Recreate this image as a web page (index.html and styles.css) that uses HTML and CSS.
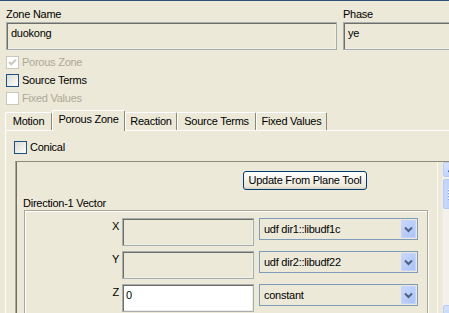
FILE: index.html
```html
<!DOCTYPE html>
<html>
<head>
<meta charset="utf-8">
<link rel="stylesheet" href="styles.css">
</head>
<body>
<div class="window">
  <div class="name-row">
    <div class="field-col zone">
      <div class="label">Zone Name</div>
      <div class="textbox">duokong</div>
    </div>
    <div class="field-col phase">
      <div class="label">Phase</div>
      <div class="textbox">ye</div>
    </div>
  </div>

  <div class="checks">
    <div class="check disabled">
      <span class="box"><svg width="11" height="11" viewBox="0 0 11 11"><path d="M2 5 L4.3 7.3 L9 2.6" fill="none" stroke="#cac8bb" stroke-width="2"/></svg></span>
      <span class="ctext">Porous Zone</span>
    </div>
    <div class="check">
      <span class="box"></span>
      <span class="ctext">Source Terms</span>
    </div>
    <div class="check disabled">
      <span class="box"></span>
      <span class="ctext">Fixed Values</span>
    </div>
  </div>

  <div class="tabs">
    <div class="tab t-motion">Motion</div>
    <div class="tab t-porous active">Porous Zone</div>
    <div class="tab t-reaction">Reaction</div>
    <div class="tab t-source">Source Terms</div>
    <div class="tab t-fixed">Fixed Values</div>
  </div>

  <div class="panel">
    <div class="check conical">
      <span class="box"></span>
      <span class="ctext">Conical</span>
    </div>

    <div class="scroller">
      <div class="content">
        <div class="btn">Update From Plane Tool</div>
        <div class="group-label">Direction-1 Vector</div>
        <div class="group">
          <div class="vrow">
            <div class="vlabel">X</div>
            <div class="textbox vfield"></div>
            <div class="combo"><span class="ctxt">udf dir1::libudf1c</span><span class="cbtn"><svg width="15" height="18" viewBox="0 0 15 18"><path d="M4 7.5 L7.5 11 L11 7.5" fill="none" stroke="#4d6185" stroke-width="2"/></svg></span></div>
          </div>
          <div class="vrow">
            <div class="vlabel">Y</div>
            <div class="textbox vfield"></div>
            <div class="combo"><span class="ctxt">udf dir2::libudf22</span><span class="cbtn"><svg width="15" height="18" viewBox="0 0 15 18"><path d="M4 7.5 L7.5 11 L11 7.5" fill="none" stroke="#4d6185" stroke-width="2"/></svg></span></div>
          </div>
          <div class="vrow">
            <div class="vlabel">Z</div>
            <div class="textbox vfield editable">0</div>
            <div class="combo"><span class="ctxt">constant</span><span class="cbtn"><svg width="15" height="18" viewBox="0 0 15 18"><path d="M4 7.5 L7.5 11 L11 7.5" fill="none" stroke="#4d6185" stroke-width="2"/></svg></span></div>
          </div>
        </div>
      </div>
      <div class="scrollbar">
        <div class="sb-btn"><svg width="17" height="14" viewBox="0 0 17 14"><path d="M4.5 9 L8.5 5 L12.5 9" fill="none" stroke="#4d6185" stroke-width="2"/></svg></div>
        <div class="sb-thumb"><span></span><span></span><span></span><span></span></div>
        <div class="sb-track"></div>
        <div class="sb-btn down"></div>
      </div>
    </div>
  </div>
</div>
</body>
</html>
```
FILE: styles.css
```css
html, body {
  margin: 0;
  padding: 0;
}
body {
  background: #ece9d8;
  font-family: "Liberation Sans", Arial, sans-serif;
  font-size: 11px;
  line-height: 13px;
  letter-spacing: -0.25px;
  color: #000;
  overflow: hidden;
}
.window {
  width: 449px;
  height: 313px;
  box-sizing: border-box;
  border-top: 1px solid #33507c;
  overflow: hidden;
}

/* name row */
.name-row {
  display: flex;
  gap: 6px;
  padding: 7px 0 0 6px;
}
.field-col { flex: none; }
.zone { width: 331px; }
.phase { width: 150px; }
.label {
  height: 13px;
  margin-bottom: 1px;
}
.textbox {
  height: 28px;
  box-sizing: border-box;
  border: 1px solid #a5acb2;
  box-shadow: inset 1px 1px 0 #716f64, inset -1px -1px 0 #f1efe2;
  padding: 4px 4px;
  white-space: nowrap;
}

/* checkboxes */
.checks { margin-top: 3px; }
.check {
  display: flex;
  align-items: flex-start;
  height: 18px;
  padding-left: 6px;
}
.box {
  width: 13px;
  height: 13px;
  box-sizing: border-box;
  margin-top: 3px;
  margin-right: 3px;
  border: 1px solid #1c5180;
  background: linear-gradient(135deg, #dcdcd7 0%, #f0f0ea 60%, #ffffff 100%);
  display: flex;
  align-items: center;
  justify-content: center;
  flex: none;
}
.ctext { margin-top: 3px; }
.check.disabled .box {
  border-color: #cac8bb;
  background: #ffffff;
}
.check.disabled .ctext { color: #aca899; }

/* tabs */
.tabs {
  display: flex;
  align-items: flex-end;
  height: 20px;
  margin-top: 3px;
  padding-left: 5px;
}
.tab {
  height: 18px;
  box-sizing: border-box;
  border-top: 1px solid #ffffff;
  border-left: 1px solid #ffffff;
  border-right: 1px solid #8b8878;
  border-radius: 2px 2px 0 0;
  text-align: center;
  line-height: 17px;
  flex: none;
}
.tab.active {
  height: 21px;
  margin-bottom: -1px;
  line-height: 17px;
  background: #ece9d8;
  position: relative;
  z-index: 2;
}
.t-motion { width: 47px; }
.t-porous { width: 73px; }
.t-reaction { width: 52px; }
.t-source { width: 79px; }
.t-fixed { width: 71px; }

/* panel */
.panel {
  margin-left: 5px;
  border-top: 1px solid #ffffff;
  border-left: 1px solid #ffffff;
  padding-top: 7px;
  height: 200px;
}
.check.conical { padding-left: 8px; }

.scroller {
  display: flex;
  margin-top: 5px;
  margin-left: 9px;
  border-top: 1px solid #8e8b7c;
  border-left: 1px solid #aca899;
  box-shadow: inset 1px 0 0 #716f64;
  height: 170px;
  width: 460px;
}
.content {
  width: 422px;
  flex: none;
  box-sizing: border-box;
  border-right: 1px solid #fbfaf6;
  padding-top: 9px;
}
.btn {
  margin-left: 227px;
  width: 124px;
  height: 19px;
  box-sizing: border-box;
  border: 1px solid #003c74;
  border-radius: 3px;
  background: linear-gradient(#ffffff 0%, #f4f3ee 40%, #ece9d8 85%, #d6d0c5 100%);
  text-align: center;
  line-height: 17px;
}
.group-label {
  margin-top: 7px;
  padding-left: 7px;
  height: 13px;
}
.group {
  margin-left: 8px;
  width: 404px;
  box-sizing: border-box;
  border: 1px solid #aca899;
  box-shadow: inset 1px 1px 0 #ffffff, 1px 1px 0 #ffffff;
  padding-top: 7px;
  height: 120px;
}
.vrow {
  display: flex;
  align-items: flex-start;
  height: 28px;
  margin-bottom: 5px;
}
.vlabel {
  width: 94px;
  margin-right: 3px;
  text-align: right;
  padding-top: 2px;
  flex: none;
}
.vfield {
  width: 132px;
  flex: none;
  padding-left: 3px;
}
.vfield.editable { background: #ffffff; }
.combo {
  margin-left: 5px;
  width: 159px;
  height: 22px;
  box-sizing: border-box;
  border: 1px solid #7f9db9;
  display: flex;
  align-items: center;
  justify-content: space-between;
  padding: 1px;
  flex: none;
}
.ctxt { padding-left: 3px; }
.cbtn {
  width: 15px;
  height: 18px;
  border-radius: 2px;
  background: linear-gradient(135deg, #c9d9fc 0%, #b7cbf7 60%, #a9c0f2 100%);
  box-shadow: inset 0 0 0 1px #c3d3fd;
  display: block;
}
.cbtn svg { display: block; }

/* scrollbar */
.scrollbar {
  margin-left: 4px;
  width: 17px;
  flex: none;
  display: flex;
  flex-direction: column;
  background: #f3f1ea;
  border-left: 1px solid #eeede5;
}
.sb-btn {
  height: 15px;
  flex: none;
  border-radius: 2px;
  border: 1px solid #bccbf0;
  box-sizing: border-box;
  background: linear-gradient(135deg, #d9e4fd 0%, #c2d3fb 60%, #b3c8f5 100%);
}
.sb-btn svg { display: block; }
.sb-thumb {
  margin-top: 2px;
  height: 30px;
  flex: none;
  box-sizing: border-box;
  border: 1px solid #b6c9f2;
  border-radius: 2px;
  background: linear-gradient(90deg, #c9d8fc 0%, #bccff9 60%, #b1c6f4 100%);
  display: flex;
  flex-direction: column;
  justify-content: center;
  align-items: flex-start;
  padding-left: 4px;
  gap: 1px;
}
.sb-thumb span {
  width: 7px;
  height: 1px;
  background: #eef3fe;
  border-bottom: 1px solid #8ca6db;
}
.sb-track {
  height: 96px;
  flex: none;
}
.sb-btn.down { height: 17px; }
```
